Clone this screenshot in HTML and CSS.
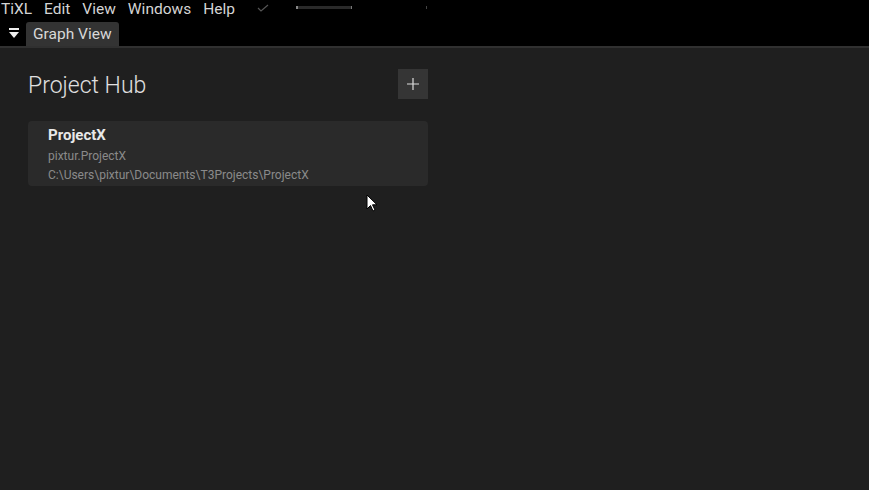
FILE: index.html
```html
<!DOCTYPE html>
<html lang="en">
<head>
  <meta charset="UTF-8">
  <title>TiXL</title>
  <link rel="stylesheet" href="styles.css">
</head>
<body>

  <div class="menubar">
    <span class="menu-item">TiXL</span>
    <span class="menu-item">Edit</span>
    <span class="menu-item">View</span>
    <span class="menu-item">Windows</span>
    <span class="menu-item">Help</span>
    <svg class="check" width="12" height="10" viewBox="0 0 12 10"><path d="M1 5 L4 8 L11 2" stroke="#555" stroke-width="1.2" fill="none"/></svg>
    <div class="progress"></div>
    <span class="tick"></span>
  </div>

  <div class="tabbar">
    <svg class="tab-menu" width="12" height="12" viewBox="0 0 12 12"><rect x="1" y="0" width="10" height="2" fill="#eee"/><path d="M1 4 L11 4 L6 10 Z" fill="#eee"/></svg>
    <div class="tab">Graph View</div>
  </div>

  <div class="main">
    <div class="hub">
      <div class="hub-header">
        <h1>Project Hub</h1>
        <button class="add-btn">
          <svg width="14" height="14" viewBox="0 0 14 14"><path d="M7 1 V13 M1 7 H13" stroke="#ddd" stroke-width="1.2"/></svg>
        </button>
      </div>
      <div class="project-card">
        <div class="project-name">ProjectX</div>
        <div class="project-ns">pixtur.ProjectX</div>
        <div class="project-path">C:\Users\pixtur\Documents\T3Projects\ProjectX</div>
      </div>
    </div>
  </div>

  <svg class="cursor" width="14" height="20" viewBox="0 0 14 20"><path d="M1 1 L1 15 L4.5 11.5 L7 17 L9 16 L6.5 10.8 L11 10.8 Z" fill="#fff" stroke="#000" stroke-width="1"/></svg>

</body>
</html>
```

FILE: styles.css
```css
body {
  margin: 0;
  padding: 0;
  width: 869px;
  height: 490px;
  overflow: hidden;
  font-family: Roboto, "Noto Sans", sans-serif;
  background-color: #1f1f1f;
  color: #ddd;
  position: relative;
}

.menubar {
  display: flex;
  align-items: center;
  height: 18px;
  padding-left: 1px;
  background: #000;
  font-size: 15.5px;
}

.menu-item {
  color: #d4d4d4;
  margin-right: 12px;
  line-height: 18px;
}

.check {
  margin-left: 10px;
  margin-top: -2px;
}

.progress {
  width: 53px;
  height: 3px;
  margin-left: 27px;
  margin-top: -3px;
  background: #2a2a2a;
  border-left: 2px solid #888;
  border-right: 1px solid #777;
}

.tick {
  width: 1px;
  height: 3px;
  margin-left: 74px;
  margin-top: -3px;
  background: #444;
}

.tabbar {
  display: flex;
  align-items: flex-end;
  height: 28px;
  background: #000;
  border-bottom: 2px solid #303030;
}

.tab-menu {
  margin-left: 8px;
  margin-right: 6px;
  margin-bottom: 6px;
}

.tab {
  background: #333;
  color: #d8d8d8;
  font-size: 15.5px;
  height: 24px;
  line-height: 24px;
  padding: 0 7px;
  border-radius: 3px 3px 0 0;
}

.main {
  padding: 20px 28px;
}

.hub {
  width: 400px;
}

.hub-header {
  display: flex;
  justify-content: space-between;
  align-items: center;
  height: 31px;
}

h1 {
  margin: 0;
  font-size: 23px;
  font-weight: 300;
  color: #e0e0e0;
  padding-top: 3px;
}

.add-btn {
  width: 30px;
  height: 30px;
  background: #353535;
  border: none;
  padding: 0;
  display: flex;
  align-items: center;
  justify-content: center;
}

.project-card {
  box-sizing: border-box;
  margin-top: 22px;
  background: #2a2a2a;
  border-radius: 4px;
  padding: 5px 20px 0;
  height: 65px;
}

.project-name {
  font-size: 15px;
  font-weight: bold;
  color: #e8e8e8;
  line-height: 19px;
}

.project-ns, .project-path {
  font-size: 12px;
  color: #8a8a8a;
  line-height: 19px;
}

.project-ns {
  margin-top: 2px;
}

.cursor {
  position: absolute;
  left: 366px;
  top: 194px;
}
```
